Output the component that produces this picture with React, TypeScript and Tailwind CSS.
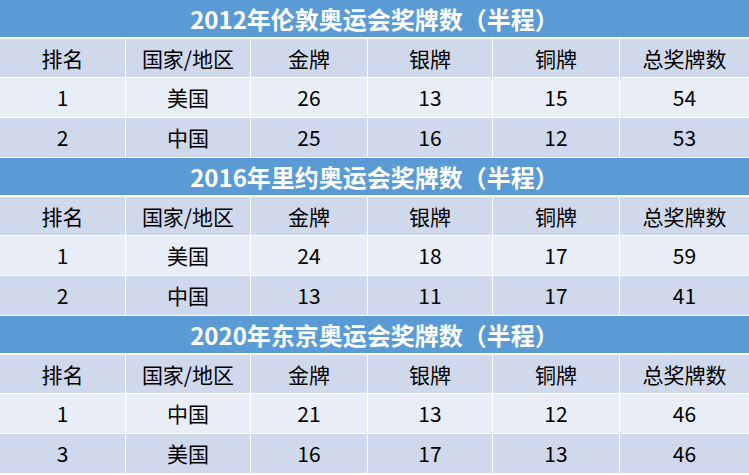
import React from "react";

type Section = { title: string; rows: string[][] };

const sections: Section[] = [
  {
    title: "2012年伦敦奥运会奖牌数（半程）",
    rows: [
      ["1", "美国", "26", "13", "15", "54"],
      ["2", "中国", "25", "16", "12", "53"],
    ],
  },
  {
    title: "2016年里约奥运会奖牌数（半程）",
    rows: [
      ["1", "美国", "24", "18", "17", "59"],
      ["2", "中国", "13", "11", "17", "41"],
    ],
  },
  {
    title: "2020年东京奥运会奖牌数（半程）",
    rows: [
      ["1", "中国", "21", "13", "12", "46"],
      ["3", "美国", "16", "17", "13", "46"],
    ],
  },
];

const headers = ["排名", "国家/地区", "金牌", "银牌", "铜牌", "总奖牌数"];

const gridCols = "grid grid-cols-[125px_124px_116px_124px_126px_129px] gap-x-px";

function Row({ cells, bg, h }: { cells: string[]; bg: string; h: string }) {
  return (
    <div className={`${gridCols} ${h}`}>
      {cells.map((c, i) => (
        <div key={i} className={`${bg} flex items-center justify-center text-[21px] text-black leading-none`}>
          {c}
        </div>
      ))}
    </div>
  );
}

export default function App() {
  return (
    <div
      className="w-[749px] h-[475px] bg-white flex flex-col overflow-hidden"
      style={{ fontFamily: '"Noto Sans CJK SC", "Noto Sans", sans-serif' }}
    >
      {sections.map((s, si) => (
        <div key={si} className="flex flex-col h-[158px] shrink-0">
          <div className="h-[37px] bg-[#5b9bd5] flex items-center justify-center text-white font-bold text-[24px] leading-none shrink-0">
            {s.title}
          </div>
          <div className="h-[2px] shrink-0" />
          <Row cells={headers} bg="bg-[#d0d9ec]" h="h-[38px] shrink-0" />
          <div className="h-px shrink-0" />
          <Row cells={s.rows[0]} bg="bg-[#e9edf5]" h="h-[39px] shrink-0" />
          <div className="h-px shrink-0" />
          <Row cells={s.rows[1]} bg="bg-[#d0d9ec]" h="h-[39px] shrink-0" />
          <div className="h-px shrink-0" />
        </div>
      ))}
    </div>
  );
}
